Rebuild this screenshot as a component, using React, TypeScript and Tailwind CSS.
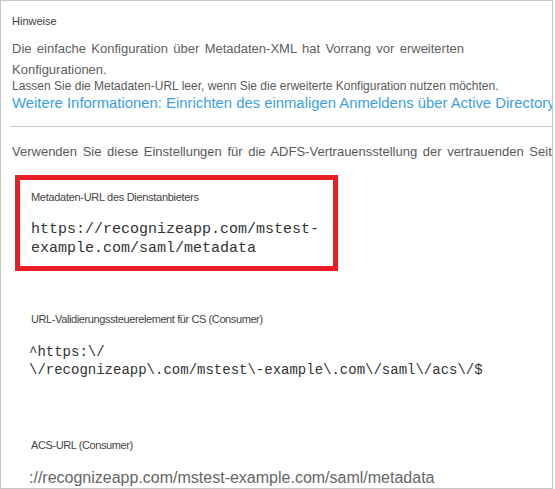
const mono = { fontFamily: '"Liberation Mono", "Courier New", monospace' };

const App = () => {
  return (
    <div className="w-[555px] h-[489px] bg-white">
      <div className="w-[553px] h-[489px] border border-[#c6c6c6] overflow-hidden font-['Liberation_Sans',Arial,sans-serif] text-[#555]">
        <div className="pl-[11px] pt-[13px]">
          <p className="text-[11px] leading-[14px] text-[#3c3c3c]">Hinweise</p>
          <p className="mt-[10px] w-[452px] text-[13px] leading-[21px] text-justify text-[#606060]">
            Die einfache Konfiguration über Metadaten-XML hat Vorrang vor erweiterten Konfigurationen.
          </p>
          <p className="-mt-[2px] text-[12px] leading-[16px] text-[#5a5a5a]">
            Lassen Sie die Metadaten-URL leer, wenn Sie die erweiterte Konfiguration nutzen möchten.
          </p>
          <a className="block whitespace-nowrap text-[14.85px] leading-[18px] text-[#3d9fe2]">
            Weitere Informationen: Einrichten des einmaligen Anmeldens über Active Directory
          </a>
        </div>
        <div className="ml-[9px] mt-[14px] h-px bg-[#c8c8c8]" />
        <div className="pl-[11px]">
          <p className="mt-[17px] whitespace-nowrap text-[13px] leading-[16px] text-[#5a5a5a] [word-spacing:2px]">
            Verwenden Sie diese Einstellungen für die ADFS-Vertrauensstellung der vertrauenden Seite
          </p>
        </div>

        <div className="ml-[14px] mt-[15px] w-[323px] h-[96px] border-[5px] border-[#ea1c24] pl-[11px] pt-[10px]">
          <p className="text-[11px] leading-[14px] tracking-[-0.3px] text-[#444]">
            Metadaten-URL des Dienstanbieters
          </p>
          <p className="mt-[16px] text-[15px] leading-[19px] text-[#333]" style={mono}>
            https://recognizeapp.com/mstest-
            <br />
            example.com/saml/metadata
          </p>
        </div>

        <div className="pl-[30px]">
          <p className="mt-[41px] text-[11px] leading-[14px] tracking-[-0.4px] text-[#444]">
            URL-Validierungssteuerelement für CS (Consumer)
          </p>
          <p className="mt-[17px] -ml-[2px] text-[14px] leading-[18px] text-[#333]" style={mono}>
            ^https:\/
            <br />
            \/recognizeapp\.com/mstest\-example\.com\/saml\/acs\/$
          </p>
          <p className="mt-[59px] text-[11px] leading-[14px] tracking-[-0.4px] text-[#444]">
            ACS-URL (Consumer)
          </p>
          <p className="mt-[16px] -ml-[2px] whitespace-nowrap text-[16px] leading-[20px] text-[#666]">
            ://recognizeapp.com/mstest-example.com/saml/metadata
          </p>
        </div>
      </div>
    </div>
  );
};

export default App;
